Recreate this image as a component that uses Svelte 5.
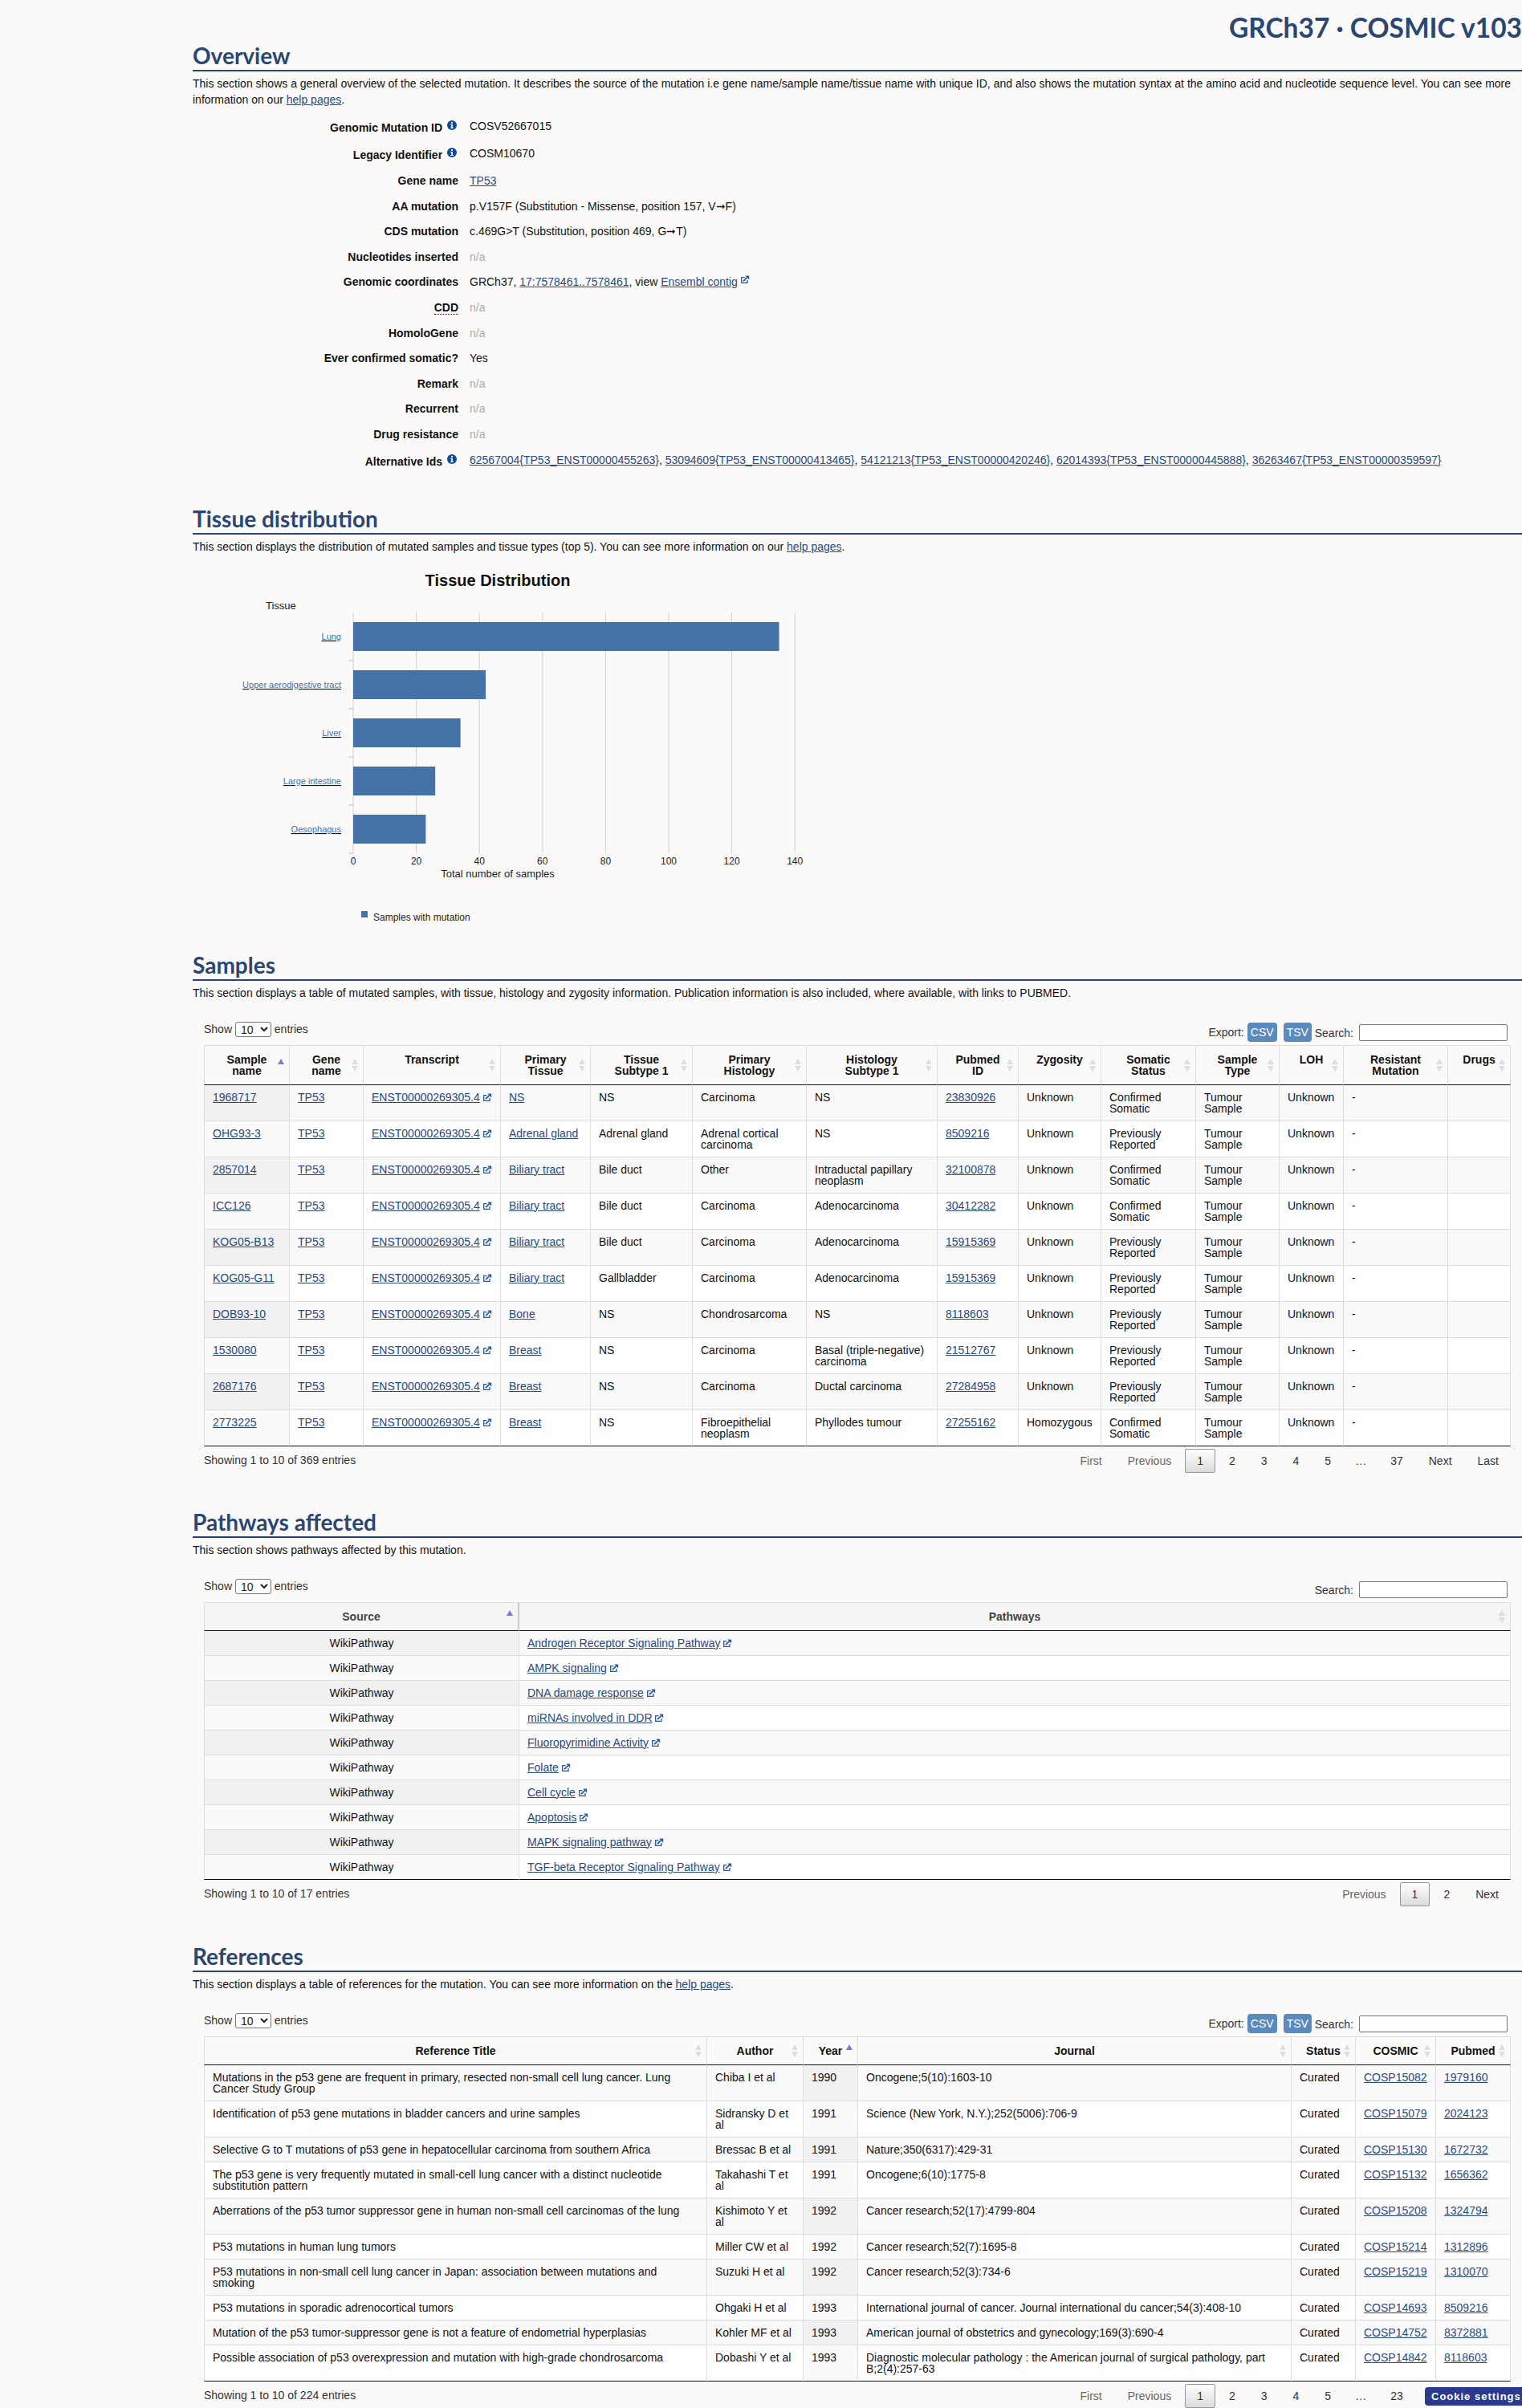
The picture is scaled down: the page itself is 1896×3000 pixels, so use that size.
<script>
  const ext = 'ENST00000269305.4';
  const sampleCols = [
    { t: 'Sample name', w: 107, s: 'asc' }, { t: 'Gene name', w: 92 }, { t: 'Transcript', w: 171 }, { t: 'Primary Tissue', w: 112 },
    { t: 'Tissue Subtype 1', w: 127 }, { t: 'Primary Histology', w: 142 }, { t: 'Histology\nSubtype 1', w: 163 }, { t: 'Pubmed ID', w: 101 },
    { t: 'Zygosity', w: 103 }, { t: 'Somatic Status', w: 118 }, { t: 'Sample Type', w: 104 }, { t: 'LOH', w: 80 },
    { t: 'Resistant Mutation', w: 130 }, { t: 'Drugs', w: 78 }
  ];
  const C = 'Confirmed Somatic', P = 'Previously Reported';
  const samples = [
    ['1968717', 'NS', 'NS', 'Carcinoma', 'NS', '23830926', 'Unknown', C],
    ['OHG93-3', 'Adrenal gland', 'Adrenal gland', 'Adrenal cortical carcinoma', 'NS', '8509216', 'Unknown', P],
    ['2857014', 'Biliary tract', 'Bile duct', 'Other', 'Intraductal papillary neoplasm', '32100878', 'Unknown', C],
    ['ICC126', 'Biliary tract', 'Bile duct', 'Carcinoma', 'Adenocarcinoma', '30412282', 'Unknown', C],
    ['KOG05-B13', 'Biliary tract', 'Bile duct', 'Carcinoma', 'Adenocarcinoma', '15915369', 'Unknown', P],
    ['KOG05-G11', 'Biliary tract', 'Gallbladder', 'Carcinoma', 'Adenocarcinoma', '15915369', 'Unknown', P],
    ['DOB93-10', 'Bone', 'NS', 'Chondrosarcoma', 'NS', '8118603', 'Unknown', P],
    ['1530080', 'Breast', 'NS', 'Carcinoma', 'Basal (triple-negative) carcinoma', '21512767', 'Unknown', P],
    ['2687176', 'Breast', 'NS', 'Carcinoma', 'Ductal carcinoma', '27284958', 'Unknown', P],
    ['2773225', 'Breast', 'NS', 'Fibroepithelial neoplasm', 'Phyllodes tumour', '27255162', 'Homozygous', C]
  ];
  const pathways = ['Androgen Receptor Signaling Pathway', 'AMPK signaling', 'DNA damage response', 'miRNAs involved in DDR', 'Fluoropyrimidine Activity', 'Folate', 'Cell cycle', 'Apoptosis', 'MAPK signaling pathway', 'TGF-beta Receptor Signaling Pathway'];
  const refCols = [
    { t: 'Reference Title', w: 627 }, { t: 'Author', w: 120 }, { t: 'Year', w: 68, s: 'asc' }, { t: 'Journal', w: 540 },
    { t: 'Status', w: 80 }, { t: 'COSMIC', w: 100 }, { t: 'Pubmed', w: 93 }
  ];
  const refs = [
    ['Mutations in the p53 gene are frequent in primary, resected non-small cell lung cancer. Lung Cancer Study Group', 'Chiba I et al', '1990', 'Oncogene;5(10):1603-10', 'COSP15082', '1979160'],
    ['Identification of p53 gene mutations in bladder cancers and urine samples', 'Sidransky D et al', '1991', 'Science (New York, N.Y.);252(5006):706-9', 'COSP15079', '2024123'],
    ['Selective G to T mutations of p53 gene in hepatocellular carcinoma from southern Africa', 'Bressac B et al', '1991', 'Nature;350(6317):429-31', 'COSP15130', '1672732'],
    ['The p53 gene is very frequently mutated in small-cell lung cancer with a distinct nucleotide substitution pattern', 'Takahashi T et al', '1991', 'Oncogene;6(10):1775-8', 'COSP15132', '1656362'],
    ['Aberrations of the p53 tumor suppressor gene in human non-small cell carcinomas of the lung', 'Kishimoto Y et al', '1992', 'Cancer research;52(17):4799-804', 'COSP15208', '1324794'],
    ['P53 mutations in human lung tumors', 'Miller CW et al', '1992', 'Cancer research;52(7):1695-8', 'COSP15214', '1312896'],
    ['P53 mutations in non-small cell lung cancer in Japan: association between mutations and smoking', 'Suzuki H et al', '1992', 'Cancer research;52(3):734-6', 'COSP15219', '1310070'],
    ['P53 mutations in sporadic adrenocortical tumors', 'Ohgaki H et al', '1993', 'International journal of cancer. Journal international du cancer;54(3):408-10', 'COSP14693', '8509216'],
    ['Mutation of the p53 tumor-suppressor gene is not a feature of endometrial hyperplasias', 'Kohler MF et al', '1993', 'American journal of obstetrics and gynecology;169(3):690-4', 'COSP14752', '8372881'],
    ['Possible association of p53 overexpression and mutation with high-grade chondrosarcoma', 'Dobashi Y et al', '1993', 'Diagnostic molecular pathology : the American journal of surgical pathology, part B;2(4):257-63', 'COSP14842', '8118603']
  ];
  const altIds = ['62567004{TP53_ENST00000455263}', '53094609{TP53_ENST00000413465}', '54121213{TP53_ENST00000420246}', '62014393{TP53_ENST00000445888}', '36263467{TP53_ENST00000359597}'];
  const bars = [
    { n: 'Lung', v: 135 }, { n: 'Upper aerodigestive tract', v: 42 }, { n: 'Liver', v: 34 }, { n: 'Large intestine', v: 26 }, { n: 'Oesophagus', v: 23 }
  ];
  const ticks = [0, 20, 40, 60, 80, 100, 120, 140];
  const px = 200, unit = 3.93;
</script>

{#snippet extIcon()}
  <svg class="ext" viewBox="0 0 11 10" width="11" height="10" aria-hidden="true">
    <path d="M4.5 2.6H0.7V9.3H8V6" fill="none" stroke="#2a5a9a" stroke-width="1.3" />
    <path d="M3 7.2L7.4 2.8" fill="none" stroke="#2a5a9a" stroke-width="1.7" />
    <path d="M5.2 0.4H10.2V5.4Z" fill="#2a5a9a" />
  </svg>
{/snippet}

{#snippet infoIcon()}
  <svg class="info" viewBox="0 0 12 12" width="12" height="12" aria-hidden="true">
    <circle cx="6" cy="6" r="6" fill="#0f4c9c" />
    <rect x="5" y="2" width="2" height="2" fill="#fff" />
    <path d="M4.2 5h2.8v4h1v1H4.2V9h1V6h-1z" fill="#fff" />
  </svg>
{/snippet}

{#snippet toolbar(exportBtns)}
  <div class="toolbar">
    <label class="show">Show
      <select><option>10</option></select>
      entries</label>
    <div class="tools">
      {#if exportBtns}
        <span class="export">Export:</span>
        <span class="btn csv">CSV</span>
        <span class="btn tsv">TSV</span>
      {/if}
      <span class="search">Search:</span>
      <input type="text" />
    </div>
  </div>
{/snippet}

{#snippet pager(items, total)}
  <div class="footer">
    <div class="showing">{total}</div>
    <div class="pager">
      {#each items as it}
        <span class="pg" class:off={it === 'First' || it === 'Previous'} class:cur={it === '1'} class:dots={it === '…'}>{it}</span>
      {/each}
    </div>
  </div>
{/snippet}

<div class="page">
  <div class="title">GRCh37 · COSMIC v103</div>

  <section class="overview">
    <h2>Overview</h2>
    <p>This section shows a general overview of the selected mutation. It describes the source of the mutation i.e gene name/sample name/tissue name with unique ID, and also shows the mutation syntax at the amino acid and nucleotide sequence level. You can see more information on our <a href="#h">help pages</a>.</p>
    <div class="dl">
      <div class="row tall"><div class="k">Genomic Mutation ID <span class="sup">{@render infoIcon()}</span></div><div class="v">COSV52667015</div></div>
      <div class="row tall"><div class="k">Legacy Identifier <span class="sup">{@render infoIcon()}</span></div><div class="v">COSM10670</div></div>
      <div class="row"><div class="k plain">Gene name</div><div class="v"><a href="#g">TP53</a></div></div>
      <div class="row"><div class="k plain">AA mutation</div><div class="v">p.V157F (Substitution - Missense, position 157, V➞F)</div></div>
      <div class="row"><div class="k plain">CDS mutation</div><div class="v">c.469G&gt;T (Substitution, position 469, G➞T)</div></div>
      <div class="row"><div class="k plain">Nucleotides inserted</div><div class="v na">n/a</div></div>
      <div class="row"><div class="k plain">Genomic coordinates</div><div class="v">GRCh37, <a href="#c">17:7578461..7578461</a>, view <a href="#e">Ensembl contig</a> {@render extIcon()}</div></div>
      <div class="row"><div class="k plain"><span class="abbr">CDD</span></div><div class="v na">n/a</div></div>
      <div class="row"><div class="k plain">HomoloGene</div><div class="v na">n/a</div></div>
      <div class="row"><div class="k plain">Ever confirmed somatic?</div><div class="v">Yes</div></div>
      <div class="row"><div class="k plain">Remark</div><div class="v na">n/a</div></div>
      <div class="row"><div class="k plain">Recurrent</div><div class="v na">n/a</div></div>
      <div class="row"><div class="k plain">Drug resistance</div><div class="v na">n/a</div></div>
      <div class="row tall"><div class="k">Alternative Ids <span class="sup">{@render infoIcon()}</span></div>
        <div class="v">{#each altIds as id, i}<a href="#a">{id}</a>{i < altIds.length - 1 ? ', ' : ''}{/each}</div></div>
    </div>
  </section>

  <section class="tissue">
    <h2>Tissue distribution</h2>
    <p>This section displays the distribution of mutated samples and tissue types (top 5). You can see more information on our <a href="#h">help pages</a>.</p>
    <svg class="chart" width="760" height="460" viewBox="0 0 760 460">
      <text x="380" y="30" text-anchor="middle" class="ct">Tissue Distribution</text>
      <text x="91" y="59" class="cl">Tissue</text>
      {#each ticks as t}
        <line x1={px + (t / 20) * 78.6} x2={px + (t / 20) * 78.6} y1="63" y2="363" stroke="#d0d0d0" stroke-width="1" />
        <text x={px + (t / 20) * 78.6} y="377" text-anchor="middle" class="ax">{t}</text>
      {/each}
      {#each bars as b, i}
        <rect x={px} y={75 + i * 60} width={b.v * unit} height="36" fill="#4572a7" />
        <line x1={px - 6} x2={px} y1={123 + i * 60} y2={123 + i * 60} stroke="#c0c0c0" stroke-width="1" />
        <text x={px - 15} y={97 + i * 60} text-anchor="end" class="bl"><tspan class="bt">{b.n}</tspan></text>
      {/each}
      <text x="380" y="393" text-anchor="middle" class="cl axt">Total number of samples</text>
      <rect x="210" y="435" width="8" height="8" fill="#4572a7" />
      <text x="225" y="447" class="ax">Samples with mutation</text>
    </svg>
  </section>

  <section class="samples">
    <h2>Samples</h2>
    <p>This section displays a table of mutated samples, with tissue, histology and zygosity information. Publication information is also included, where available, with links to PUBMED.</p>
    <div class="dt">
      {@render toolbar(true)}
      <table>
        <colgroup>{#each sampleCols as c}<col style="width:{c.w}px" />{/each}</colgroup>
        <thead><tr>{#each sampleCols as c}<th class:asc={c.s === 'asc'}>{c.t}</th>{/each}</tr></thead>
        <tbody>
          {#each samples as r}
            <tr>
              <td class="sorted"><a href="#s">{r[0]}</a></td>
              <td><a href="#s">TP53</a></td>
              <td><a href="#s">{ext}</a> {@render extIcon()}</td>
              <td><a href="#s">{r[1]}</a></td>
              <td>{r[2]}</td>
              <td>{r[3]}</td>
              <td>{r[4]}</td>
              <td><a href="#s">{r[5]}</a></td>
              <td>{r[6]}</td>
              <td>{r[7]}</td>
              <td>Tumour Sample</td>
              <td>Unknown</td>
              <td>-</td>
              <td></td>
            </tr>
          {/each}
        </tbody>
      </table>
      {@render pager(['First', 'Previous', '1', '2', '3', '4', '5', '…', '37', 'Next', 'Last'], 'Showing 1 to 10 of 369 entries')}
    </div>
  </section>

  <section class="pathways">
    <h2>Pathways affected</h2>
    <p>This section shows pathways affected by this mutation.</p>
    <div class="dt">
      {@render toolbar(false)}
      <table class="pw">
        <colgroup><col class="pw1" /><col /></colgroup>
        <thead><tr><th class="asc sep">Source</th><th>Pathways</th></tr></thead>
        <tbody>
          {#each pathways as p}
            <tr><td class="sorted center">WikiPathway</td><td><a href="#p">{p}</a> {@render extIcon()}</td></tr>
          {/each}
        </tbody>
      </table>
      {@render pager(['Previous', '1', '2', 'Next'], 'Showing 1 to 10 of 17 entries')}
    </div>
  </section>

  <section class="references">
    <h2>References</h2>
    <p>This section displays a table of references for the mutation. You can see more information on the <a href="#h">help pages</a>.</p>
    <div class="dt">
      {@render toolbar(true)}
      <table>
        <colgroup>{#each refCols as c}<col style="width:{c.w}px" />{/each}</colgroup>
        <thead><tr>{#each refCols as c}<th class:asc={c.s === 'asc'}>{c.t}</th>{/each}</tr></thead>
        <tbody>
          {#each refs as r}
            <tr>
              <td>{r[0]}</td>
              <td>{r[1]}</td>
              <td class="sorted">{r[2]}</td>
              <td>{r[3]}</td>
              <td>Curated</td>
              <td><a href="#r">{r[4]}</a></td>
              <td><a href="#r">{r[5]}</a></td>
            </tr>
          {/each}
        </tbody>
      </table>
      {@render pager(['First', 'Previous', '1', '2', '3', '4', '5', '…', '23', 'Next', 'Last'], 'Showing 1 to 10 of 224 entries')}
    </div>
  </section>

  <div class="cookie">Cookie settings</div>
</div>

<style>
  :global(html), :global(body) { margin: 0; background: #fbfaf8; }
  .page {
    position: relative; height: 3000px; overflow: hidden; background: #fbfaf8; box-sizing: border-box;
    padding-left: 240px; font: 14px/20px "Liberation Sans", Arial, sans-serif; color: #111;
  }
  .title {
    height: 55px; text-align: right; font: 700 33.5px/68px Lato, sans-serif; color: #2a4672; white-space: nowrap;
  }
  h2 {
    margin: 0; height: 32px; font: 700 28px/29px Lato, sans-serif; color: #2a4672; border-bottom: 2px solid #2a4672;
  }
  p { margin: 5px 0 0 0; }
  a { color: #2a4a7c; text-decoration: underline; }
  .ext { vertical-align: top; margin-top: 2px; }

  .dl { margin-top: 13px; }
  .row { display: flex; height: 31.6px; }
  .row.tall { height: 34px; }
  .k { width: 331px; flex: none; text-align: right; font-weight: 700; padding-top: 2px; box-sizing: border-box; padding-right: 2px; color: #111; white-space: nowrap; }
  .k.plain { padding-top: 0; padding-right: 0; }
  .sup { display: inline-block; width: 14px; height: 14px; vertical-align: top; line-height: 0; text-align: left; }
  .sup svg { display: block; margin: 1px 0 0 2px; }
  .v { margin-left: 14px; white-space: nowrap; color: #111; }
  .na { color: #aaa; }
  .abbr { border-bottom: 1px dotted #111; }

  .tissue { margin-top: 35px; }
  .chart { display: block; margin-top: 9px; }
  .ct { font: 700 20px "Liberation Sans", Arial, sans-serif; fill: #111; }
  .cl { font: 13px "Liberation Sans", Arial, sans-serif; fill: #222; }
  .ax { font: 12px "Liberation Sans", Arial, sans-serif; fill: #222; }
  .bl { font: 11px "Liberation Sans", Arial, sans-serif; fill: #111; text-decoration: underline; }
  .bt { fill: #4572a7; }

  .samples { margin-top: 28px; }
  .pathways { margin-top: 47px; }
  .references { margin-top: 48px; }

  .dt { margin: 0 14px; color: #333; }
  .toolbar { display: flex; justify-content: space-between; align-items: flex-end; height: 55px; }
  .show { display: block; padding-bottom: 10px; line-height: 19px; }
  select { width: 45px; height: 19px; font: 14px "Liberation Sans", Arial, sans-serif; padding: 0 0 0 2px; box-sizing: border-box; border: 1px solid #767676; border-radius: 3px; background: #fff; color: #222; vertical-align: top; }
  .tools { display: flex; align-items: center; padding-bottom: 4px; height: 24px; padding-right: 4px; }
  .export { margin-right: 4px; }
  .btn { height: 24px; line-height: 24px; color: #fff; background: #5b8abd; border-radius: 4px; text-align: center; }
  .csv { width: 37px; margin-right: 8px; }
  .tsv { width: 35px; margin-right: 4px; }
  .search { margin-right: 7px; margin-top: 2px; }
  input { width: 185px; height: 21px; box-sizing: border-box; border: 1px solid #767676; border-radius: 2px; background: #fff; padding: 0; margin-top: 2px; }

  table { width: 100%; table-layout: fixed; border-collapse: separate; border-spacing: 0; line-height: 14px; color: #111; background: #fff; }
  thead { background: #fbfaf8; }
  th { position: relative; padding: 10px 18px; font-weight: 700; text-align: center; vertical-align: top; white-space: pre-line; border-top: 1px solid #ddd; border-right: 1px solid #ddd; border-bottom: 1px solid #111; }
  th:first-child, td:first-child { border-left: 1px solid #ddd; }
  th::before, th::after { content: ""; position: absolute; right: 6px; top: 50%; border-left: 4.5px solid transparent; border-right: 4.5px solid transparent; }
  th::before { margin-top: -8px; border-bottom: 7px solid #dedede; }
  th::after { margin-top: 1px; border-top: 7px solid #dedede; }
  th.asc::before { border-bottom-color: #7a7ad8; }
  th.asc::after { display: none; }
  td { padding: 8px 10px; vertical-align: top; border-top: 1px solid #ddd; border-right: 1px solid #ddd; }
  tbody tr:first-child td { border-top: 0; }
  tbody tr:nth-child(odd) td { background: #f9f9f9; }
  tbody tr:nth-child(odd) td.sorted { background: #f1f1f1; }
  tbody tr:nth-child(even) td.sorted { background: #fafafa; }
  tbody tr:last-child td { border-bottom: 1px solid #111; }
  .center { text-align: center; }
  .pw1 { width: 393px; }
  .pw thead { background: #f5f5f5; }
  .pw th { color: #444; }
  .pw th.sep { border-right: 2px solid #ccc; }

  .footer { display: flex; justify-content: space-between; height: 33px; line-height: 14px; }
  .showing { padding-top: 10px; }
  .pager { display: flex; align-items: flex-start; padding-top: 3px; }
  .pg { box-sizing: border-box; min-width: 21px; padding: 7px 14px; margin-left: 2px; border: 1px solid transparent; border-radius: 2px; color: #333; text-align: center; }
  .off { color: #666; }
  .dots { padding: 7px 12px; }
  .cur { border-color: #979797; background: linear-gradient(#fff, #dcdcdc); color: #333; }

  .cookie {
    position: absolute; right: 0; top: 2974px; width: 121px; height: 23px; box-sizing: border-box; padding-left: 8px;
    background: #2a3a8c; color: #fff; font: 700 13px/23px "Liberation Sans", Arial, sans-serif; letter-spacing: 1px; border-radius: 4px 0 0 4px; white-space: nowrap; overflow: hidden;
  }
</style>
